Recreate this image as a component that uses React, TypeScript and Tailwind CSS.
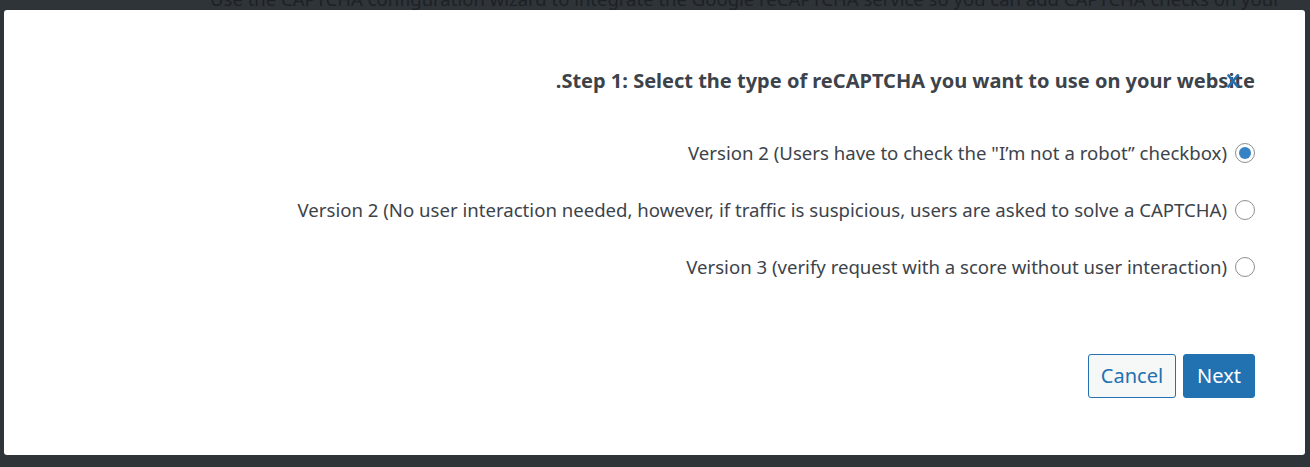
import React from "react";

const font = { fontFamily: '"Noto Sans", "Open Sans", sans-serif' };

function Radio({ checked }: { checked?: boolean }) {
  return (
    <span className="flex h-[20px] w-[20px] shrink-0 items-center justify-center rounded-full border border-[#8c8f94] bg-white">
      {checked && <span className="h-[12px] w-[12px] rounded-full bg-[#3582c4]" />}
    </span>
  );
}

const options = [
  { label: 'Version 2 (Users have to check the "I’m not a robot” checkbox)', checked: true },
  {
    label:
      "Version 2 (No user interaction needed, however, if traffic is suspicious, users are asked to solve a CAPTCHA)",
    checked: false,
  },
  { label: "Version 3 (verify request with a score without user interaction)", checked: false },
];

export default function App() {
  return (
    <div
      className="relative h-[467px] w-full overflow-hidden bg-[#2f3439] px-[4px] pt-[10px]"
      style={font}
    >
      <p className="absolute left-[210px] top-[-15px] whitespace-nowrap text-[18.5px] leading-[28px] text-[#1d2125]">
        Use the CAPTCHA configuration wizard to integrate the Google reCAPTCHA service so you can add CAPTCHA checks on your
      </p>
      <div className="relative flex h-[445px] w-[1301px] flex-col items-end rounded-[3px] bg-white pr-[50px] pt-[58px]">
        <h2 className="text-[20px] font-bold leading-[26px] text-[#3c434a]">
          .Step 1: Select the type of reCAPTCHA you want to use on your website
        </h2>
        <button className="absolute right-[65px] top-[63px] flex h-[16px] w-[14px] items-center justify-center">
          <svg width="12" height="14" viewBox="0 0 12 14">
            <path d="M1.5 1.5 L10.5 12.5 M10.5 1.5 L1.5 12.5" stroke="#2271b1" strokeWidth="2.6" strokeLinecap="round" />
          </svg>
        </button>
        <div className="mt-[47px] flex flex-col items-end gap-[33px]">
          {options.map((o, i) => (
            <label key={i} className="flex items-center gap-[8px]">
              <span className="text-[18.6px] leading-[24px] text-[#3c434a]">{o.label}</span>
              <Radio checked={o.checked} />
            </label>
          ))}
        </div>
        <div className="mt-[75px] flex gap-[7px]">
          <button className="h-[44px] w-[88px] rounded-[3px] border border-[#2271b1] bg-[#f6f7f7] text-[20px] text-[#2271b1]">
            Cancel
          </button>
          <button className="h-[44px] w-[72px] rounded-[3px] border border-[#2271b1] bg-[#2271b1] text-[20px] text-white">
            Next
          </button>
        </div>
      </div>
    </div>
  );
}
